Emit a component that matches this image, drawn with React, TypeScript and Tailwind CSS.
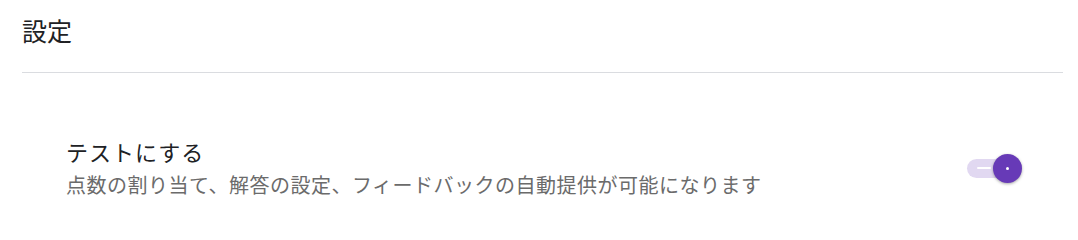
import React, { useState } from 'react';

const font = { fontFamily: '"Noto Sans CJK JP", "Noto Sans", sans-serif' };

const Toggle = ({ on, onChange }: { on: boolean; onChange: () => void }) => (
  <button
    type="button"
    onClick={onChange}
    className="relative flex h-[30px] w-[56px] shrink-0 items-center"
  >
    <span
      className={`absolute left-0 top-[6px] h-[19px] w-[48px] rounded-full ${on ? 'bg-[#e1d8f1]' : 'bg-[#dcdcdc]'}`}
    >
      <span className="absolute left-[10px] top-[8.5px] h-[2px] w-[14px] rounded-full bg-white" />
    </span>
    <span
      className={`absolute top-[1px] flex h-[29px] w-[29px] items-center justify-center rounded-full shadow-[0_1px_3px_rgba(0,0,0,0.35)] ${on ? 'left-[26px] bg-[#673ab7]' : 'left-0 bg-[#fafafa]'}`}
    >
      <span className="h-[3px] w-[3px] rounded-full bg-white" />
    </span>
  </button>
);

const App = () => {
  const [isQuiz, setIsQuiz] = useState(true);

  return (
    <div className="min-h-[225px] w-full bg-white" style={font}>
      <div className="ml-[22px] mr-[15px]">
        <h1 className="pt-[12px] text-[25px] leading-[36px] text-[#202124]">設定</h1>
        <div className="mt-[24px] h-px bg-[#dadce0]" />
        <div className="flex items-center justify-between pl-[44px] pr-[40px] pt-[63px]">
          <div className="flex flex-col">
            <span className="text-[22px] leading-[30px] tracking-[1px] text-[#202124]">テストにする</span>
            <span className="mt-[5px] text-[20px] leading-[28px] tracking-[0.5px] text-[#6b6b6b]">
              点数の割り当て、解答の設定、フィードバックの自動提供が可能になります
            </span>
          </div>
          <Toggle on={isQuiz} onChange={() => setIsQuiz(!isQuiz)} />
        </div>
      </div>
    </div>
  );
};

export default App;
